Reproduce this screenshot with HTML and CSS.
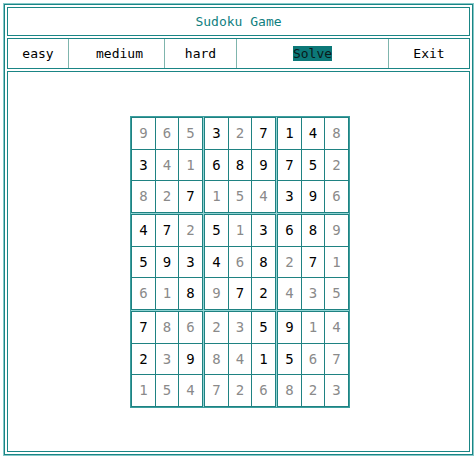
FILE: index.html
```html
<!DOCTYPE html>
<html>
<head>
<meta charset="utf-8">
<link rel="stylesheet" href="styles.css">
</head>
<body>
<div class="app">
  <div class="title">Sudoku Game</div>
  <div class="nav">
    <div class="nav-item w-easy">easy</div>
    <div class="nav-item w-medium">medium</div>
    <div class="nav-item w-hard">hard</div>
    <div class="nav-item w-solve"><span class="active">Solve</span></div>
    <div class="nav-item w-exit">Exit</div>
  </div>
  <div class="main">
    <div class="board">
      <div class="block">
        <div class="c g">9</div><div class="c g">6</div><div class="c g">5</div>
        <div class="c">3</div><div class="c g">4</div><div class="c g">1</div>
        <div class="c g">8</div><div class="c g">2</div><div class="c">7</div>
      </div>
      <div class="block">
        <div class="c">3</div><div class="c g">2</div><div class="c">7</div>
        <div class="c">6</div><div class="c">8</div><div class="c">9</div>
        <div class="c g">1</div><div class="c g">5</div><div class="c g">4</div>
      </div>
      <div class="block">
        <div class="c">1</div><div class="c">4</div><div class="c g">8</div>
        <div class="c">7</div><div class="c">5</div><div class="c g">2</div>
        <div class="c">3</div><div class="c">9</div><div class="c g">6</div>
      </div>
      <div class="block">
        <div class="c">4</div><div class="c">7</div><div class="c g">2</div>
        <div class="c">5</div><div class="c">9</div><div class="c">3</div>
        <div class="c g">6</div><div class="c g">1</div><div class="c">8</div>
      </div>
      <div class="block">
        <div class="c">5</div><div class="c g">1</div><div class="c">3</div>
        <div class="c">4</div><div class="c g">6</div><div class="c">8</div>
        <div class="c g">9</div><div class="c">7</div><div class="c">2</div>
      </div>
      <div class="block">
        <div class="c">6</div><div class="c">8</div><div class="c g">9</div>
        <div class="c g">2</div><div class="c">7</div><div class="c g">1</div>
        <div class="c g">4</div><div class="c g">3</div><div class="c g">5</div>
      </div>
      <div class="block">
        <div class="c">7</div><div class="c g">8</div><div class="c g">6</div>
        <div class="c">2</div><div class="c g">3</div><div class="c">9</div>
        <div class="c g">1</div><div class="c g">5</div><div class="c g">4</div>
      </div>
      <div class="block">
        <div class="c g">2</div><div class="c g">3</div><div class="c">5</div>
        <div class="c g">8</div><div class="c g">4</div><div class="c">1</div>
        <div class="c g">7</div><div class="c g">2</div><div class="c g">6</div>
      </div>
      <div class="block">
        <div class="c">9</div><div class="c g">1</div><div class="c g">4</div>
        <div class="c">5</div><div class="c g">6</div><div class="c g">7</div>
        <div class="c g">8</div><div class="c g">2</div><div class="c g">3</div>
      </div>
    </div>
  </div>
</div>
</body>
</html>
```
FILE: styles.css
```css
html, body {
  margin: 0;
  padding: 0;
  background: #ffffff;
}
body {
  font-family: "DejaVu Sans Mono", "Liberation Mono", monospace;
  font-size: 13px;
  color: #000;
}
.app {
  margin: 3px;
  width: 463px;
  border: 1px solid #86c9c9;
  box-shadow: inset 0 0 0 1px #1a8585;
  padding: 3px;
  display: flex;
  flex-direction: column;
  gap: 2px;
}
.title {
  height: 27px;
  border: 1px solid #1a8585;
  display: flex;
  align-items: center;
  justify-content: center;
  color: #108080;
}
.nav {
  height: 29px;
  border: 1px solid #1a8585;
  display: flex;
}
.nav-item {
  display: flex;
  align-items: center;
  justify-content: center;
  border-right: 1px solid #7fb5ad;
  box-sizing: border-box;
}
.nav-item:last-child {
  border-right: none;
}
.w-easy { width: 61px; }
.w-medium { width: 96px; padding-left: 6px; }
.w-hard { width: 72px; }
.w-solve { width: 152px; }
.w-exit { width: 80px; }
.active {
  background: #0c7878;
  color: #0a1a1a;
  line-height: 15px;
}
.main {
  height: 379px;
  border: 1px solid #1a8585;
  display: flex;
  align-items: center;
  justify-content: center;
  padding-left: 3px;
}
.board {
  display: grid;
  grid-template-columns: repeat(3, 72px);
  gap: 1px;
  border: 1px solid #3c9e9e;
  background: #8fd3d3;
}
.block {
  display: grid;
  grid-template-columns: 23px 22px 23px;
  grid-template-rows: 31px 30px 31px;
  gap: 1px;
  padding: 1px;
  background: #1f8282;
}
.c {
  background: #fff;
  display: flex;
  align-items: center;
  justify-content: center;
  font-size: 14px;
  color: #000;
}
.c.g {
  color: #8a8a8a;
}
```
